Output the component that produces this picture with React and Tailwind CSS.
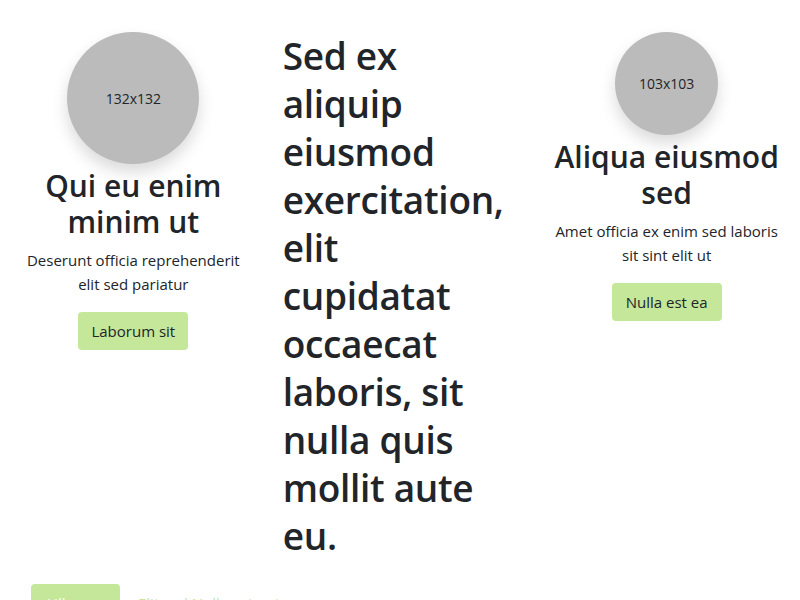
export default function App() {
  const font = { fontFamily: '"Open Sans", "Noto Sans", sans-serif' };
  return (
    <div className="bg-white text-[#212529] min-h-[600px] overflow-hidden" style={font}>
      <div className="grid grid-cols-3 pt-8">
        <div className="flex flex-col items-center px-4 text-center">
          <div className="w-[132px] h-[132px] rounded-full bg-[#bbbbbb] shadow-[0_8px_16px_rgba(0,0,0,0.15)] flex items-center justify-center text-[14px]">132x132</div>
          <h3 className="mt-1 text-[30px] leading-[36px] font-semibold">Qui eu enim minim ut</h3>
          <p className="mt-2 text-[15px] leading-6">Deserunt officia reprehenderit elit sed pariatur</p>
          <button className="mt-4 h-[38px] px-[13px] rounded bg-[#c4e79a] text-[15px]">Laborum sit</button>
        </div>
        <div className="px-4">
          <h2 className="max-w-[226px] text-[37px] leading-[48px] font-semibold tracking-[-0.3px]">Sed ex aliquip eiusmod exercitation, elit cupidatat occaecat laboris, sit nulla quis mollit aute eu.</h2>
        </div>
        <div className="flex flex-col items-center px-4 text-center">
          <div className="w-[103px] h-[103px] rounded-full bg-[#bbbbbb] shadow-[0_8px_16px_rgba(0,0,0,0.15)] flex items-center justify-center text-[14px]">103x103</div>
          <h3 className="mt-1 text-[30px] leading-[36px] font-semibold">Aliqua eiusmod sed</h3>
          <p className="mt-2 text-[15px] leading-6">Amet officia ex enim sed laboris sit sint elit ut</p>
          <button className="mt-4 h-[38px] px-[14px] rounded bg-[#c4e79a] text-[15px]">Nulla est ea</button>
        </div>
      </div>
      <div className="flex items-center gap-[18px] px-[31px] mt-6">
        <button className="h-[38px] w-[89px] rounded bg-[#c4e79a] text-white text-[15px]">Ullamco</button>
        <a className="text-[#c4e79a] text-[15px]">Elit sed Nulla est aute</a>
      </div>
    </div>
  );
}
